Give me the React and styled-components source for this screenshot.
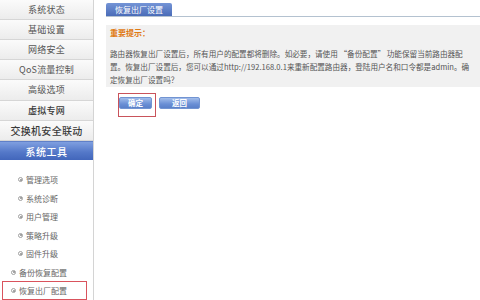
import React from "react";
import styled, { createGlobalStyle } from "styled-components";

const Global = createGlobalStyle`
  html, body { margin: 0; padding: 0; background: #fff; }
  body { font-family: "Noto Sans CJK SC", "Noto Sans", sans-serif; }
`;

const Page = styled.div`
  display: flex;
  width: 480px;
  height: 300px;
  overflow: hidden;
  background: #fff;
`;

const Sidebar = styled.div`
  width: 93px;
  flex: none;
  border-right: 1px solid #d4d4d4;
  display: flex;
  flex-direction: column;
`;

const NavItem = styled.div`
  height: 19.4px;
  border-bottom: 1px solid #d6d6d6;
  background: linear-gradient(#fbfbfb, #ececec);
  display: flex;
  align-items: center;
  justify-content: center;
  font-size: ${(p) => (p.$wide ? "10px" : "9px")};
  font-weight: ${(p) => (p.$bold ? 500 : 400)};
  color: ${(p) => (p.$bold ? "#3a3a3a" : "#555")};
  white-space: nowrap;
  letter-spacing: ${(p) => (p.$wide ? "0.3px" : "0.2px")};
`;

const ActiveItem = styled.div`
  height: 20px;
  background: linear-gradient(#7f9fe0, #5579c9 55%, #4266bb);
  border-top: 1px solid #6080c8;
  box-sizing: border-box;
  display: flex;
  align-items: center;
  justify-content: center;
  color: #fff;
  font-size: 10px;
  font-weight: 500;
  letter-spacing: 0.5px;
`;

const SubList = styled.div`
  padding-top: 10px;
  display: flex;
  flex-direction: column;
`;

const SubItem = styled.div`
  height: 18.5px;
  box-sizing: border-box;
  display: flex;
  align-items: center;
  gap: 3px;
  margin-right: ${(p) => (p.$marked ? "6px" : "0")};
  margin-left: ${(p) => (p.$marked ? "2px" : "0")};
  padding-left: ${(p) => (p.$marked ? "8px" : p.$outer ? "10px" : "17px")};
  border: ${(p) => (p.$marked ? "1px solid #d9535d" : "1px solid transparent")};
  font-size: 8px;
  color: #666;
  white-space: nowrap;
`;

const Bullet = styled.span`
  width: 5px;
  height: 5px;
  border-radius: 50%;
  border: 1px solid #a0a0a0;
  box-sizing: border-box;
  display: inline-flex;
  align-items: center;
  justify-content: center;
  &::after {
    content: "";
    width: 2px;
    height: 2px;
    border-radius: 50%;
    background: #8a8a8a;
  }
`;

const Main = styled.div`
  flex: 1;
  min-width: 0;
  padding-left: 12px;
  padding-top: 3px;
  display: flex;
  flex-direction: column;
`;

const TabBar = styled.div`
  display: flex;
  align-items: flex-end;
  border-bottom: 1px solid #b4c2d0;
`;

const Tab = styled.div`
  width: 66px;
  height: 13px;
  border-radius: 2px 2px 0 0;
  background: linear-gradient(#7494d6, #4a6cb8);
  color: #fff;
  font-size: 8px;
  display: flex;
  align-items: center;
  justify-content: center;
`;

const Notice = styled.div`
  margin-top: 8px;
  background: #f1f1f1;
  padding: 1px 4px 1.5px 4px;
`;

const NoticeTitle = styled.div`
  color: #e07a14;
  font-size: 8px;
  font-weight: 700;
  line-height: 13px;
`;

const NoticeText = styled.div`
  margin-top: 7.5px;
  color: #555;
  font-size: 7.6px;
  line-height: 13px;
  white-space: nowrap;
`;

const Actions = styled.div`
  margin-top: 10px;
  padding-left: 13px;
  display: flex;
  gap: 7px;
`;

const Marked = styled.div`
  position: relative;
  display: flex;
  &::after {
    content: "";
    position: absolute;
    left: -1px;
    top: -4px;
    width: 36px;
    height: 22px;
    border: 1px solid #c9535b;
    pointer-events: none;
  }
`;

const Button = styled.button`
  width: ${(p) => p.$w}px;
  height: 12px;
  padding: 0;
  border: 1px solid #7294d2;
  border-radius: 2px;
  background: linear-gradient(#a2bdea, #6a8fd5 60%, #5a80c9);
  color: #fff;
  font-family: "Noto Sans CJK SC", sans-serif;
  font-size: 7.5px;
  font-weight: 700;
  line-height: 10px;
  display: flex;
  align-items: center;
  justify-content: center;
`;

const navs = [
  { t: "系统状态" },
  { t: "基础设置" },
  { t: "网络安全" },
  { t: "QoS流量控制" },
  { t: "高级选项" },
  { t: "虚拟专网", bold: true },
  { t: "交换机安全联动", bold: true, wide: true },
];

const subs = ["管理选项", "系统诊断", "用户管理", "策略升级", "固件升级"];

export default function App() {
  return (
    <Page>
      <Global />
      <Sidebar>
        {navs.map((n) => (
          <NavItem key={n.t} $bold={n.bold} $wide={n.wide}>
            {n.t}
          </NavItem>
        ))}
        <ActiveItem>系统工具</ActiveItem>
        <SubList>
          {subs.map((s) => (
            <SubItem key={s}>
              <Bullet />
              {s}
            </SubItem>
          ))}
          <SubItem $outer>
            <Bullet />
            备份恢复配置
          </SubItem>
          <SubItem $outer $marked>
            <Bullet />
            恢复出厂配置
          </SubItem>
        </SubList>
      </Sidebar>
      <Main>
        <TabBar>
          <Tab>恢复出厂设置</Tab>
        </TabBar>
        <Notice>
          <NoticeTitle>重要提示：</NoticeTitle>
          <NoticeText>
            路由器恢复出厂设置后，所有用户的配置都将删除。如必要，请使用 “备份配置” 功能保留当前路由器配
            <br />
            置。恢复出厂设置后，您可以通过http://192.168.0.1来重新配置路由器，登陆用户名和口令都是admin。确
            <br />
            定恢复出厂设置吗？
          </NoticeText>
        </Notice>
        <Actions>
          <Marked>
            <Button $w={33}>确定</Button>
          </Marked>
          <Button $w={41}>返回</Button>
        </Actions>
      </Main>
    </Page>
  );
}
